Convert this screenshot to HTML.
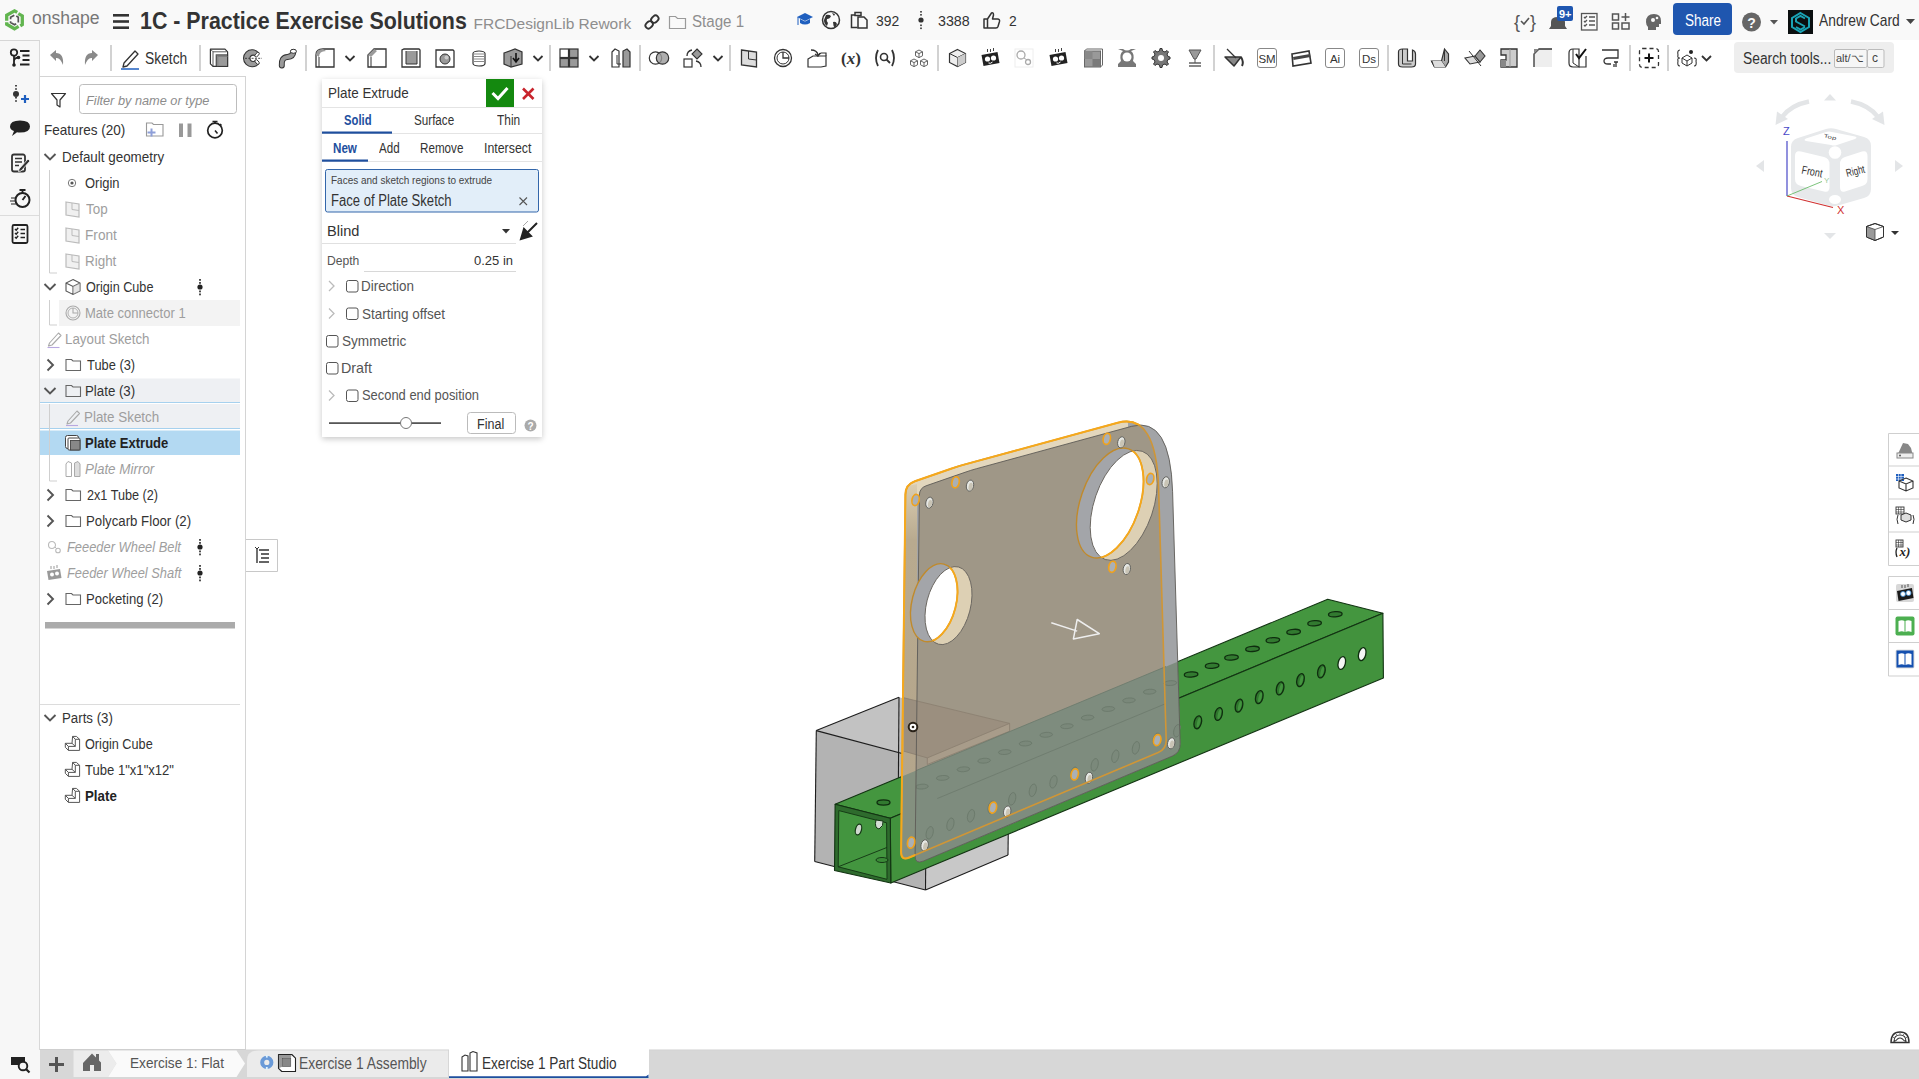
<!DOCTYPE html>
<html><head><meta charset="utf-8">
<style>
*{box-sizing:border-box;margin:0;padding:0}
html,body{width:1919px;height:1079px;overflow:hidden;background:#fff;font-family:"Liberation Sans",sans-serif;color:#333;position:relative}
.a{position:absolute}
.t{position:absolute;white-space:nowrap;line-height:1}
svg.full{position:absolute;left:0;top:0;width:1919px;height:1079px;overflow:visible}

</style></head><body>
<div class="a" style="left:0;top:0;width:1919px;height:40px;background:#f9f9f9"></div>
<div class="a" style="left:0;top:40px;width:40px;height:1010px;background:#f7f7f7;border-right:1px solid #d8d8d8;border-top:1px solid #d6d6d6"></div>
<div class="a" style="left:0;top:215px;width:39px;height:1px;background:#dcdcdc"></div>
<div class="a" style="left:40px;top:76px;width:206px;height:974px;background:#fff;border-top:1px solid #d4d4d4;border-right:1px solid #d4d4d4"></div>
<div class="a" style="left:0;top:1050px;width:1919px;height:29px;background:#dcdcdc"></div>
<div class="a" style="left:0;top:1050px;width:40px;height:29px;background:#f7f7f7"></div>
<svg class="full" viewBox="0 0 1919 1079"><polygon points="816.3,730.6 926.5,760.0 925.5,890.0 814.7,861.5" fill="#b3b3b3" stroke="none" stroke-width="1" stroke-linejoin="round" /><polygon points="926.5,760.0 1009.5,724.6 1008.0,855.0 925.5,890.0" fill="#c8c8c8" stroke="none" stroke-width="1" stroke-linejoin="round" /><polygon points="816.3,730.6 899.0,697.3 1009.5,724.6 926.5,760.0" fill="#c2c2c2" stroke="none" stroke-width="1" stroke-linejoin="round" /><line x1="816.3" y1="730.6" x2="899.0" y2="697.3" stroke="#1c1c1c" stroke-width="1.1" /><line x1="816.3" y1="730.6" x2="814.7" y2="861.5" stroke="#1c1c1c" stroke-width="1.1" /><line x1="814.7" y1="861.5" x2="925.5" y2="890.0" stroke="#1c1c1c" stroke-width="1.1" /><line x1="925.5" y1="890.0" x2="1008.0" y2="855.0" stroke="#1c1c1c" stroke-width="1.1" /><line x1="1008.0" y1="855.0" x2="1009.5" y2="724.6" stroke="#1c1c1c" stroke-width="1.1" /><line x1="899.0" y1="697.3" x2="898.4" y2="778.0" stroke="#1c1c1c" stroke-width="1.1" /><line x1="816.3" y1="730.6" x2="926.5" y2="760.0" stroke="#1c1c1c" stroke-width="1.1" /><line x1="926.5" y1="760.0" x2="925.5" y2="890.0" stroke="#1c1c1c" stroke-width="1.1" /><polygon points="835.1,804.3 1327.7,599.2 1382.9,613.2 890.3,818.3" fill="#44963f" stroke="#123312" stroke-width="1.1" stroke-linejoin="round" /><polygon points="890.3,818.3 1382.9,613.2 1383.4,677.9 890.8,883.0" fill="#42923d" stroke="#123312" stroke-width="1.1" stroke-linejoin="round" /><polygon points="835.1,804.3 890.3,818.3 890.8,883.0 834.5,870.5" fill="#2e6b2d" stroke="#123312" stroke-width="1.1" stroke-linejoin="round" /><polygon points="838.8,810.6 886.6,822.8 887.0,879.3 838.2,866.8" fill="#43953f" stroke="#123312" stroke-width="0.9" stroke-linejoin="round" /><line x1="838.2" y1="866.8" x2="886.8" y2="847.5" stroke="#123312" stroke-width="0.9" /><ellipse cx="858.5" cy="829.5" rx="3" ry="5.5" transform="rotate(15 858.5 829.5)" fill="#cfd8cf" stroke="#163816" stroke-width="1.2"/><path d="M876,820 Q874,828 879,829 Q884,826 883,821Z" fill="#d4ddd4" stroke="#163816" stroke-width="1"/><ellipse cx="882" cy="860" rx="6" ry="2.5" fill="#3a8a37" stroke="#163816" stroke-width="1"/><ellipse cx="1335.3" cy="614.3" rx="6.8" ry="2.6" transform="rotate(-4 1335.3 614.3)" fill="#327a30" stroke="#0f2d0f" stroke-width="1.3"/><ellipse cx="1314.6" cy="623.2" rx="6.8" ry="2.6" transform="rotate(-4 1314.6 623.2)" fill="#327a30" stroke="#0f2d0f" stroke-width="1.3"/><ellipse cx="1293.6" cy="631.9" rx="6.8" ry="2.6" transform="rotate(-4 1293.6 631.9)" fill="#327a30" stroke="#0f2d0f" stroke-width="1.3"/><ellipse cx="1272.9" cy="640.2" rx="6.8" ry="2.6" transform="rotate(-4 1272.9 640.2)" fill="#327a30" stroke="#0f2d0f" stroke-width="1.3"/><ellipse cx="1252.5" cy="648.9" rx="6.8" ry="2.6" transform="rotate(-4 1252.5 648.9)" fill="#327a30" stroke="#0f2d0f" stroke-width="1.3"/><ellipse cx="1231.5" cy="657.5" rx="6.8" ry="2.6" transform="rotate(-4 1231.5 657.5)" fill="#327a30" stroke="#0f2d0f" stroke-width="1.3"/><ellipse cx="1212.1" cy="665.8" rx="6.8" ry="2.6" transform="rotate(-4 1212.1 665.8)" fill="#327a30" stroke="#0f2d0f" stroke-width="1.3"/><ellipse cx="1191.1" cy="674.5" rx="6.8" ry="2.6" transform="rotate(-4 1191.1 674.5)" fill="#327a30" stroke="#0f2d0f" stroke-width="1.3"/><ellipse cx="883.5" cy="802.5" rx="6.5" ry="2.6" fill="#327a30" stroke="#0f2d0f" stroke-width="1.3"/><ellipse cx="1362.2" cy="654.1" rx="3.6" ry="6.6" transform="rotate(14 1362.2 654.1)" fill="#f4f6f4" stroke="#0f2d0f" stroke-width="1.3"/><ellipse cx="1341.8" cy="663" rx="3.6" ry="6.6" transform="rotate(14 1341.8 663)" fill="#f4f6f4" stroke="#0f2d0f" stroke-width="1.3"/><ellipse cx="1321.4" cy="671.4" rx="3.6" ry="6.6" transform="rotate(14 1321.4 671.4)" fill="#2f762d" stroke="#0f2d0f" stroke-width="1.3"/><ellipse cx="1322.2" cy="671.4" rx="1.5" ry="5" transform="rotate(14 1321.4 671.4)" fill="#43953f"/><ellipse cx="1300.5" cy="680.1" rx="3.6" ry="6.6" transform="rotate(14 1300.5 680.1)" fill="#2f762d" stroke="#0f2d0f" stroke-width="1.3"/><ellipse cx="1301.3" cy="680.1" rx="1.5" ry="5" transform="rotate(14 1300.5 680.1)" fill="#43953f"/><ellipse cx="1280.1" cy="688.4" rx="3.6" ry="6.6" transform="rotate(14 1280.1 688.4)" fill="#2f762d" stroke="#0f2d0f" stroke-width="1.3"/><ellipse cx="1280.8999999999999" cy="688.4" rx="1.5" ry="5" transform="rotate(14 1280.1 688.4)" fill="#43953f"/><ellipse cx="1259.3" cy="697.1" rx="3.6" ry="6.6" transform="rotate(14 1259.3 697.1)" fill="#2f762d" stroke="#0f2d0f" stroke-width="1.3"/><ellipse cx="1260.1" cy="697.1" rx="1.5" ry="5" transform="rotate(14 1259.3 697.1)" fill="#43953f"/><ellipse cx="1239" cy="705.6" rx="3.6" ry="6.6" transform="rotate(14 1239 705.6)" fill="#2f762d" stroke="#0f2d0f" stroke-width="1.3"/><ellipse cx="1239.8" cy="705.6" rx="1.5" ry="5" transform="rotate(14 1239 705.6)" fill="#43953f"/><ellipse cx="1218.6" cy="714" rx="3.6" ry="6.6" transform="rotate(14 1218.6 714)" fill="#2f762d" stroke="#0f2d0f" stroke-width="1.3"/><ellipse cx="1219.3999999999999" cy="714" rx="1.5" ry="5" transform="rotate(14 1218.6 714)" fill="#43953f"/><ellipse cx="1197.8" cy="722.3" rx="3.6" ry="6.6" transform="rotate(14 1197.8 722.3)" fill="#2f762d" stroke="#0f2d0f" stroke-width="1.3"/><ellipse cx="1198.6" cy="722.3" rx="1.5" ry="5" transform="rotate(14 1197.8 722.3)" fill="#43953f"/><defs><linearGradient id="lband" x1="0" y1="480" x2="0" y2="880" gradientUnits="userSpaceOnUse"><stop offset="0" stop-color="#dccfb3"/><stop offset="0.15" stop-color="#b8aa8f"/><stop offset="1" stop-color="#b3a48a"/></linearGradient><clipPath id="cpF"><path d="M923.3,861.1 L1172.2,756.1 Q1180.5,752.6 1180.2,743.6 L1172.6,491.8 Q1170.3,415.8 1131.7,426.3 L976.5,468.7 Q970.7,470.3 965.0,472.3 L926.1,485.8 Q919.5,488.1 919.4,495.1 L915.1,855.6 Q915.0,864.6 923.3,861.1 Z"/></clipPath><clipPath id="cpB"><path d="M909.3,857.5 L1158.2,752.5 Q1166.5,749.0 1166.2,740.0 L1158.6,488.2 Q1156.3,412.2 1117.7,422.7 L962.5,465.1 Q956.7,466.7 951.0,468.7 L914.9,481.2 Q905.5,484.5 905.4,494.5 L901.1,852.0 Q901.0,861.0 909.3,857.5 Z"/></clipPath><clipPath id="cpT"><polygon points="835.1,804.3 1327.7,599.2 1383.4,677.9 890.8,883.0 834.5,870.5"/></clipPath></defs><path d="M909.3,857.5 L1158.2,752.5 Q1166.5,749.0 1166.2,740.0 L1158.6,488.2 Q1156.3,412.2 1117.7,422.7 L962.5,465.1 Q956.7,466.7 951.0,468.7 L914.9,481.2 Q905.5,484.5 905.4,494.5 L901.1,852.0 Q901.0,861.0 909.3,857.5 Z" fill="#a2a4a7"/><path d="M923.3,861.1 L1172.2,756.1 Q1180.5,752.6 1180.2,743.6 L1172.6,491.8 Q1170.3,415.8 1131.7,426.3 L976.5,468.7 Q970.7,470.3 965.0,472.3 L926.1,485.8 Q919.5,488.1 919.4,495.1 L915.1,855.6 Q915.0,864.6 923.3,861.1 Z" fill="#a2a4a7"/><g clip-path="url(#cpB)"><polygon points="890,400 1128,400 1128,440 890,510" fill="#e3d7bd"/><polygon points="890,490 917,484 917,880 890,880" fill="url(#lband)"/></g><g clip-path="url(#cpF)"><path d="M909.3,857.5 L1158.2,752.5 Q1166.5,749.0 1166.2,740.0 L1158.6,488.2 Q1156.3,412.2 1117.7,422.7 L962.5,465.1 Q956.7,466.7 951.0,468.7 L914.9,481.2 Q905.5,484.5 905.4,494.5 L901.1,852.0 Q901.0,861.0 909.3,857.5 Z" fill="#9f9787"/></g><g clip-path="url(#cpT)"><path d="M909.3,857.5 L1158.2,752.5 Q1166.5,749.0 1166.2,740.0 L1158.6,488.2 Q1156.3,412.2 1117.7,422.7 L962.5,465.1 Q956.7,466.7 951.0,468.7 L914.9,481.2 Q905.5,484.5 905.4,494.5 L901.1,852.0 Q901.0,861.0 909.3,857.5 Z" fill="#84907f"/><path d="M923.3,861.1 L1172.2,756.1 Q1180.5,752.6 1180.2,743.6 L1172.6,491.8 Q1170.3,415.8 1131.7,426.3 L976.5,468.7 Q970.7,470.3 965.0,472.3 L926.1,485.8 Q919.5,488.1 919.4,495.1 L915.1,855.6 Q915.0,864.6 923.3,861.1 Z" fill="#7e8c7e"/></g><g clip-path="url(#cpB)"><polygon points="903.9,697.8 1009.6,723.4 1009.6,731.2 927.3,764.5 927.3,757.9 903.9,751.2" fill="#9b8f7f"/><polygon points="927.3,757.9 1009.6,723.4 1009.6,731.2 927.3,764.5" fill="#a89c8a"/></g><path d="M903.9,697.8 L1009.6,723.4 V731.2 L927.3,764.5 V757.9 L903.9,751.2 M927.3,757.9 L1009.6,723.4" fill="none" stroke="#8a7f70" stroke-width="0.8" clip-path="url(#cpB)"/><line x1="916.0" y1="770.6" x2="1166.0" y2="666.5" stroke="#6e7c6e" stroke-width="0.9" clip-path="url(#cpF)"/><line x1="937.3" y1="798.5" x2="1166.0" y2="703.5" stroke="#6e7c6e" stroke-width="0.9" clip-path="url(#cpF)"/><ellipse cx="1170.4" cy="683.1" rx="6.3" ry="2.4" transform="rotate(-4 1170.4 683.1)" fill="#7a887a" stroke="#6c7a6c" stroke-width="0.9" clip-path="url(#cpF)"/><ellipse cx="1149.7" cy="691.7" rx="6.3" ry="2.4" transform="rotate(-4 1149.7 691.7)" fill="#7a887a" stroke="#6c7a6c" stroke-width="0.9" clip-path="url(#cpF)"/><ellipse cx="1129.0" cy="700.4" rx="6.3" ry="2.4" transform="rotate(-4 1129.0 700.4)" fill="#7a887a" stroke="#6c7a6c" stroke-width="0.9" clip-path="url(#cpF)"/><ellipse cx="1108.3" cy="709.0" rx="6.3" ry="2.4" transform="rotate(-4 1108.3 709.0)" fill="#7a887a" stroke="#6c7a6c" stroke-width="0.9" clip-path="url(#cpF)"/><ellipse cx="1087.6" cy="717.6" rx="6.3" ry="2.4" transform="rotate(-4 1087.6 717.6)" fill="#7a887a" stroke="#6c7a6c" stroke-width="0.9" clip-path="url(#cpF)"/><ellipse cx="1066.9" cy="726.2" rx="6.3" ry="2.4" transform="rotate(-4 1066.9 726.2)" fill="#7a887a" stroke="#6c7a6c" stroke-width="0.9" clip-path="url(#cpF)"/><ellipse cx="1046.2" cy="734.8" rx="6.3" ry="2.4" transform="rotate(-4 1046.2 734.8)" fill="#7a887a" stroke="#6c7a6c" stroke-width="0.9" clip-path="url(#cpF)"/><ellipse cx="1025.5" cy="743.5" rx="6.3" ry="2.4" transform="rotate(-4 1025.5 743.5)" fill="#7a887a" stroke="#6c7a6c" stroke-width="0.9" clip-path="url(#cpF)"/><ellipse cx="1004.8" cy="752.1" rx="6.3" ry="2.4" transform="rotate(-4 1004.8 752.1)" fill="#7a887a" stroke="#6c7a6c" stroke-width="0.9" clip-path="url(#cpF)"/><ellipse cx="984.1" cy="760.7" rx="6.3" ry="2.4" transform="rotate(-4 984.1 760.7)" fill="#7a887a" stroke="#6c7a6c" stroke-width="0.9" clip-path="url(#cpF)"/><ellipse cx="963.4" cy="769.3" rx="6.3" ry="2.4" transform="rotate(-4 963.4 769.3)" fill="#7a887a" stroke="#6c7a6c" stroke-width="0.9" clip-path="url(#cpF)"/><ellipse cx="942.7" cy="777.9" rx="6.3" ry="2.4" transform="rotate(-4 942.7 777.9)" fill="#7a887a" stroke="#6c7a6c" stroke-width="0.9" clip-path="url(#cpF)"/><ellipse cx="922.0" cy="786.6" rx="6.3" ry="2.4" transform="rotate(-4 922.0 786.6)" fill="#7a887a" stroke="#6c7a6c" stroke-width="0.9" clip-path="url(#cpF)"/><ellipse cx="1177.2" cy="730.8" rx="3.4" ry="6.4" transform="rotate(14 1177.2 730.8)" fill="#7b897b" stroke="#6c7a6c" stroke-width="0.9" clip-path="url(#cpF)"/><ellipse cx="1156.6" cy="739.3" rx="3.4" ry="6.4" transform="rotate(14 1156.6 739.3)" fill="#7b897b" stroke="#6c7a6c" stroke-width="0.9" clip-path="url(#cpF)"/><ellipse cx="1135.9" cy="747.8" rx="3.4" ry="6.4" transform="rotate(14 1135.9 747.8)" fill="#7b897b" stroke="#6c7a6c" stroke-width="0.9" clip-path="url(#cpF)"/><ellipse cx="1115.3" cy="756.3" rx="3.4" ry="6.4" transform="rotate(14 1115.3 756.3)" fill="#7b897b" stroke="#6c7a6c" stroke-width="0.9" clip-path="url(#cpF)"/><ellipse cx="1094.7" cy="764.8" rx="3.4" ry="6.4" transform="rotate(14 1094.7 764.8)" fill="#7b897b" stroke="#6c7a6c" stroke-width="0.9" clip-path="url(#cpF)"/><ellipse cx="1074.1" cy="773.3" rx="3.4" ry="6.4" transform="rotate(14 1074.1 773.3)" fill="#7b897b" stroke="#6c7a6c" stroke-width="0.9" clip-path="url(#cpF)"/><ellipse cx="1053.5" cy="781.8" rx="3.4" ry="6.4" transform="rotate(14 1053.5 781.8)" fill="#7b897b" stroke="#6c7a6c" stroke-width="0.9" clip-path="url(#cpF)"/><ellipse cx="1032.8" cy="790.3" rx="3.4" ry="6.4" transform="rotate(14 1032.8 790.3)" fill="#7b897b" stroke="#6c7a6c" stroke-width="0.9" clip-path="url(#cpF)"/><ellipse cx="1012.2" cy="798.8" rx="3.4" ry="6.4" transform="rotate(14 1012.2 798.8)" fill="#7b897b" stroke="#6c7a6c" stroke-width="0.9" clip-path="url(#cpF)"/><ellipse cx="991.6" cy="807.3" rx="3.4" ry="6.4" transform="rotate(14 991.6 807.3)" fill="#7b897b" stroke="#6c7a6c" stroke-width="0.9" clip-path="url(#cpF)"/><ellipse cx="971.0" cy="815.8" rx="3.4" ry="6.4" transform="rotate(14 971.0 815.8)" fill="#7b897b" stroke="#6c7a6c" stroke-width="0.9" clip-path="url(#cpF)"/><ellipse cx="950.4" cy="824.3" rx="3.4" ry="6.4" transform="rotate(14 950.4 824.3)" fill="#7b897b" stroke="#6c7a6c" stroke-width="0.9" clip-path="url(#cpF)"/><ellipse cx="929.7" cy="832.8" rx="3.4" ry="6.4" transform="rotate(14 929.7 832.8)" fill="#7b897b" stroke="#6c7a6c" stroke-width="0.9" clip-path="url(#cpF)"/><path d="M923.3,861.1 L1172.2,756.1 Q1180.5,752.6 1180.2,743.6 L1172.6,491.8 Q1170.3,415.8 1131.7,426.3 L976.5,468.7 Q970.7,470.3 965.0,472.3 L926.1,485.8 Q919.5,488.1 919.4,495.1 L915.1,855.6 Q915.0,864.6 923.3,861.1 Z" fill="none" stroke="#5d5b57" stroke-width="0.9"/><defs><clipPath id="h1110503"><ellipse cx="1123.7" cy="505.4" rx="29.5" ry="57.2" transform="rotate(18.9 1123.7 505.4)"/></clipPath></defs><ellipse cx="1123.7" cy="505.4" rx="29.5" ry="57.2" transform="rotate(18.9 1123.7 505.4)" fill="#ddd0b4"/><ellipse cx="1110" cy="503" rx="29.5" ry="57.2" transform="rotate(18.9 1110 503)" fill="#a3a5a9"/><g clip-path="url(#h1110503)"><ellipse cx="1110" cy="503" rx="29.5" ry="57.2" transform="rotate(18.9 1110 503)" fill="#fff"/></g><ellipse cx="1123.7" cy="505.4" rx="29.5" ry="57.2" transform="rotate(18.9 1123.7 505.4)" fill="none" stroke="#6a6660" stroke-width="0.9"/><ellipse cx="1110" cy="503" rx="29.5" ry="57.2" transform="rotate(18.9 1110 503)" fill="none" stroke="#c08a2c" stroke-width="1.4"/><g clip-path="url(#h1110503)"><ellipse cx="1110" cy="503" rx="29.5" ry="57.2" transform="rotate(18.9 1110 503)" fill="none" stroke="#f5a81c" stroke-width="1.9"/></g><defs><clipPath id="h934602"><ellipse cx="948.5" cy="605.6" rx="22" ry="39.9" transform="rotate(14.4 948.5 605.6)"/></clipPath></defs><ellipse cx="948.5" cy="605.6" rx="22" ry="39.9" transform="rotate(14.4 948.5 605.6)" fill="#ddd0b4"/><ellipse cx="934" cy="602.7" rx="22" ry="39.9" transform="rotate(14.4 934 602.7)" fill="#a3a5a9"/><g clip-path="url(#h934602)"><ellipse cx="934" cy="602.7" rx="22" ry="39.9" transform="rotate(14.4 934 602.7)" fill="#fff"/></g><ellipse cx="948.5" cy="605.6" rx="22" ry="39.9" transform="rotate(14.4 948.5 605.6)" fill="none" stroke="#6a6660" stroke-width="0.9"/><ellipse cx="934" cy="602.7" rx="22" ry="39.9" transform="rotate(14.4 934 602.7)" fill="none" stroke="#c08a2c" stroke-width="1.4"/><g clip-path="url(#h934602)"><ellipse cx="934" cy="602.7" rx="22" ry="39.9" transform="rotate(14.4 934 602.7)" fill="none" stroke="#f5a81c" stroke-width="1.9"/></g><ellipse cx="1121.3" cy="442.3" rx="3.6" ry="5.6" transform="rotate(12 1121.3 442.3)" fill="#e6e8e4" stroke="#5f5f5a" stroke-width="0.9"/><ellipse cx="1122.1" cy="443.1" rx="2" ry="3.8" transform="rotate(12 1121.3 442.3)" fill="#c9c4b5"/><ellipse cx="1106.8" cy="438.9" rx="3.6" ry="5.6" transform="rotate(12 1106.8 438.9)" fill="#aab0b6" stroke="#f0a21c" stroke-width="1.7"/><ellipse cx="970" cy="485.6" rx="3.6" ry="5.6" transform="rotate(12 970 485.6)" fill="#e6e8e4" stroke="#5f5f5a" stroke-width="0.9"/><ellipse cx="970.8" cy="486.40000000000003" rx="2" ry="3.8" transform="rotate(12 970 485.6)" fill="#c9c4b5"/><ellipse cx="955.6" cy="482.3" rx="3.6" ry="5.6" transform="rotate(12 955.6 482.3)" fill="#aab0b6" stroke="#f0a21c" stroke-width="1.7"/><ellipse cx="929.4" cy="502.7" rx="3.6" ry="5.6" transform="rotate(12 929.4 502.7)" fill="#e6e8e4" stroke="#5f5f5a" stroke-width="0.9"/><ellipse cx="930.1999999999999" cy="503.5" rx="2" ry="3.8" transform="rotate(12 929.4 502.7)" fill="#c9c4b5"/><ellipse cx="915.6" cy="500" rx="3.6" ry="5.6" transform="rotate(12 915.6 500)" fill="#aab0b6" stroke="#f0a21c" stroke-width="1.7"/><ellipse cx="1165.7" cy="482.3" rx="3.6" ry="5.6" transform="rotate(12 1165.7 482.3)" fill="#e6e8e4" stroke="#5f5f5a" stroke-width="0.9"/><ellipse cx="1166.5" cy="483.1" rx="2" ry="3.8" transform="rotate(12 1165.7 482.3)" fill="#c9c4b5"/><ellipse cx="1150.2" cy="479" rx="3.6" ry="5.6" transform="rotate(12 1150.2 479)" fill="#aab0b6" stroke="#f0a21c" stroke-width="1.7"/><ellipse cx="1126.8" cy="569" rx="3.6" ry="5.6" transform="rotate(12 1126.8 569)" fill="#e6e8e4" stroke="#5f5f5a" stroke-width="0.9"/><ellipse cx="1127.6" cy="569.8" rx="2" ry="3.8" transform="rotate(12 1126.8 569)" fill="#c9c4b5"/><ellipse cx="1112.4" cy="566.8" rx="3.6" ry="5.6" transform="rotate(12 1112.4 566.8)" fill="#aab0b6" stroke="#f0a21c" stroke-width="1.7"/><ellipse cx="924.6" cy="845.3" rx="3.6" ry="5.6" transform="rotate(12 924.6 845.3)" fill="#e6e8e4" stroke="#5f5f5a" stroke-width="0.9"/><ellipse cx="925.4" cy="846.0999999999999" rx="2" ry="3.8" transform="rotate(12 924.6 845.3)" fill="#c9c4b5"/><ellipse cx="911.1" cy="842.7" rx="3.6" ry="5.6" transform="rotate(12 911.1 842.7)" fill="#aab0b6" stroke="#f0a21c" stroke-width="1.7"/><ellipse cx="1007.2" cy="811.5" rx="3.6" ry="5.6" transform="rotate(12 1007.2 811.5)" fill="#e6e8e4" stroke="#5f5f5a" stroke-width="0.9"/><ellipse cx="1008.0" cy="812.3" rx="2" ry="3.8" transform="rotate(12 1007.2 811.5)" fill="#c9c4b5"/><ellipse cx="992.9" cy="807.6" rx="3.6" ry="5.6" transform="rotate(12 992.9 807.6)" fill="#aab0b6" stroke="#f0a21c" stroke-width="1.7"/><ellipse cx="1088.9" cy="777.8" rx="3.6" ry="5.6" transform="rotate(12 1088.9 777.8)" fill="#e6e8e4" stroke="#5f5f5a" stroke-width="0.9"/><ellipse cx="1089.7" cy="778.5999999999999" rx="2" ry="3.8" transform="rotate(12 1088.9 777.8)" fill="#c9c4b5"/><ellipse cx="1074.7" cy="774.4" rx="3.6" ry="5.6" transform="rotate(12 1074.7 774.4)" fill="#aab0b6" stroke="#f0a21c" stroke-width="1.7"/><ellipse cx="1171.2" cy="743.3" rx="3.6" ry="5.6" transform="rotate(12 1171.2 743.3)" fill="#e6e8e4" stroke="#5f5f5a" stroke-width="0.9"/><ellipse cx="1172.0" cy="744.0999999999999" rx="2" ry="3.8" transform="rotate(12 1171.2 743.3)" fill="#c9c4b5"/><ellipse cx="1157.2" cy="740.1" rx="3.6" ry="5.6" transform="rotate(12 1157.2 740.1)" fill="#aab0b6" stroke="#f0a21c" stroke-width="1.7"/><defs><clipPath id="cpOut"><path clip-rule="evenodd" d="M700,350 H1300 V950 H700 Z M923.3,861.1 L1172.2,756.1 Q1180.5,752.6 1180.2,743.6 L1172.6,491.8 Q1170.3,415.8 1131.7,426.3 L976.5,468.7 Q970.7,470.3 965.0,472.3 L926.1,485.8 Q919.5,488.1 919.4,495.1 L915.1,855.6 Q915.0,864.6 923.3,861.1 Z"/></clipPath></defs><path d="M909.3,857.5 L1158.2,752.5 Q1166.5,749.0 1166.2,740.0 L1158.6,488.2 Q1156.3,412.2 1117.7,422.7 L962.5,465.1 Q956.7,466.7 951.0,468.7 L914.9,481.2 Q905.5,484.5 905.4,494.5 L901.1,852.0 Q901.0,861.0 909.3,857.5 Z" fill="none" stroke="#d09636" stroke-width="1.6"/><path d="M909.3,857.5 L1158.2,752.5 Q1166.5,749.0 1166.2,740.0 L1158.6,488.2 Q1156.3,412.2 1117.7,422.7 L962.5,465.1 Q956.7,466.7 951.0,468.7 L914.9,481.2 Q905.5,484.5 905.4,494.5 L901.1,852.0 Q901.0,861.0 909.3,857.5 Z" fill="none" stroke="#f5a81c" stroke-width="2" clip-path="url(#cpOut)"/><path d="M1051.3,622.8 L1077.2,631.1 M1077.2,619.5 L1099.3,633.7 L1073.4,638.9 Z" fill="none" stroke="#eeeeee" stroke-width="1.5" stroke-linejoin="round"/><circle cx="913" cy="727" r="4.3" fill="#fff" stroke="#2a2218" stroke-width="2"/><circle cx="913" cy="727" r="1.3" fill="#2a2218"/></svg>
<svg class="full" viewBox="0 0 1919 1079">
<!-- onshape logo -->
<g fill="none" stroke-linejoin="miter">
<path d="M6.7,20.8 V15.3 L14.5,10.8 L17.2,12.4" stroke="#62b550" stroke-width="3.3"/>
<path d="M18.3,13.6 L22.3,15.9 V24.6 L20.3,25.8" stroke="#62b550" stroke-width="3.3"/>
<path d="M6.7,22.3 V24.3 L14.5,28.8 L18.6,26.4" stroke="#62b550" stroke-width="3.3"/>
<path d="M10.6,19.3 V17.3 L14.3,15.2" stroke="#555" stroke-width="1.7"/>
<path d="M16.3,16.1 L18.3,17.3 V22.5" stroke="#555" stroke-width="1.7"/>
<path d="M10.6,21.3 V22.5 L14.5,24.7 L16.2,23.7" stroke="#555" stroke-width="1.7"/>
</g>
<!-- hamburger -->
<g fill="#333"><rect x="113" y="14" width="16" height="2.6"/><rect x="113" y="20.2" width="16" height="2.6"/><rect x="113" y="26.4" width="16" height="2.6"/></g>
<!-- link icon -->
<g transform="translate(652,22) rotate(-45)" fill="none" stroke="#333" stroke-width="1.8">
<rect x="-8" y="-3" width="8" height="6" rx="3"/><rect x="0" y="-3" width="8" height="6" rx="3"/>
</g>
<!-- folder -->
<path d="M669.5,16.5 h6 l2,2 h8 v10 h-16 z" fill="none" stroke="#9a9a9a" stroke-width="1.2"/>
<!-- grad cap -->
<g fill="#1f5fbf"><path d="M797,17 L805,13 L813,17 L805,21 Z"/><path d="M800,19 v4 q5,3 10,0 v-4 l-5,2.5 z"/><rect x="797.5" y="17" width="1" height="8"/></g>
<!-- globe -->
<circle cx="831" cy="20" r="8.5" fill="none" stroke="#333" stroke-width="1.5"/>
<path d="M826,15 q3,-1 5,1 q-1,3 -4,3 q-1,2 1,4 l-1,3 q-3,-2 -3,-6 z M833,22 q3,-1 4,2 l-2,4 q-2,-2 -2,-6z M832,13 l3,1 -1,2z" fill="#333"/>
<!-- copy icon -->
<g fill="none" stroke="#333" stroke-width="1.5"><path d="M855,15 h-3.5 v12.5 h6"/><path d="M858,17 h6 l3,3 v8 h-9 z"/><rect x="855" y="12.5" width="6" height="3" fill="#f9f9f9"/></g>
<!-- dots -->
<g fill="#333"><circle cx="921" cy="20" r="2.6"/><rect x="920.2" y="11" width="1.6" height="1.6"/><rect x="920.2" y="14" width="1.6" height="1.6"/><rect x="920.2" y="24.5" width="1.6" height="1.6"/><rect x="920.2" y="27.5" width="1.6" height="1.6"/></g>
<!-- thumbs up -->
<path d="M984,19 h3.5 v9 h-3.5 z M987.5,19 l4,-6 q2,-1 2,2 l-1,4 h5 q2.5,0 2,2.5 l-1.5,5 q-0.5,1.5 -2,1.5 h-8.5" fill="none" stroke="#333" stroke-width="1.5" stroke-linejoin="round"/>
<!-- {v} -->
<text x="1514" y="28" font-family="Liberation Sans" font-size="18" fill="#555">{</text>
<text x="1530" y="28" font-family="Liberation Sans" font-size="18" fill="#555">}</text>
<path d="M1521,21 l3,3 l5,-6" fill="none" stroke="#555" stroke-width="1.6"/>
<!-- bell -->
<path d="M1549,29 h18 l-2,-3 v-4 q0,-5 -7,-5 q-7,0 -7,5 v4 z" fill="#555"/>
<rect x="1557" y="6" width="16" height="15" rx="2" fill="#1e56b0"/>
<text x="1559" y="18" font-family="Liberation Sans" font-size="11" font-weight="bold" fill="#fff">9+</text>
<!-- checklist -->
<g fill="none" stroke="#555" stroke-width="1.3"><rect x="1581.5" y="13.5" width="15.5" height="16.5"/><path d="M1584,17 l1,1 2,-2 M1584,21 l1,1 2,-2 M1584,25 l1,1 2,-2 M1589,17 h6 M1589,21 h6 M1589,25 h6"/></g>
<!-- grid -->
<g fill="none" stroke="#555" stroke-width="1.5"><rect x="1612.5" y="14" width="6" height="6"/><rect x="1612.5" y="23" width="6" height="6"/><rect x="1622" y="23" width="7" height="6"/><path d="M1625.5,13 v8 M1621.5,17 h8"/></g>
<!-- brain head -->
<path d="M1646,22 q0,-8 8,-8 q7,0 7,7 l0,3 -2,0 0,3 -3,0 0,3 -8,0 0,-3 q-2,-2 -2,-5z" fill="#666"/>
<circle cx="1653" cy="20" r="2" fill="#f9f9f9"/><circle cx="1657" cy="18" r="1.3" fill="#f9f9f9"/>
<!-- share -->
<rect x="1673" y="3" width="59" height="32" rx="4" fill="#1f56af"/>
<!-- help -->
<circle cx="1751.5" cy="22" r="9.5" fill="#666"/>
<text x="1751.5" y="27.5" text-anchor="middle" font-family="Liberation Sans" font-size="14" font-weight="bold" fill="#f9f9f9">?</text>
<path d="M1770,20 h8 l-4,4.5z" fill="#555"/>
<!-- avatar -->
<rect x="1788" y="10" width="25" height="24" fill="#0b0f10"/>
<path d="M1800.5,13 l8.5,5 v9 l-8.5,5 l-8.5,-5 v-9 z" fill="none" stroke="#1aa3b5" stroke-width="2"/>
<path d="M1805,18.5 l-4.5,-2.5 -4.5,2.5 v3 l9,5 v0" fill="none" stroke="#1aa3b5" stroke-width="2"/>
<path d="M1796,27 l4.5,2.5 4.5,-2.5" fill="none" stroke="#1aa3b5" stroke-width="2"/>
<path d="M1906,19 h9 l-4.5,5z" fill="#444"/>
</svg>
<div class="t" style="left:31.50px;top:9.00px;font-size:18.00px;color:#777;transform:scaleX(0.9775);transform-origin:0 0">onshape</div>
<div class="t" style="left:140.08px;top:10.00px;font-size:23.25px;font-weight:bold;color:#333;transform:scaleX(0.9196);transform-origin:0 0">1C - Practice Exercise Solutions</div>
<div class="t" style="left:473.50px;top:16.00px;font-size:15.50px;color:#8e8e8e">FRCDesignLib Rework</div>
<div class="t" style="left:692.00px;top:13.00px;font-size:16.25px;color:#8e8e8e;transform:scaleX(0.9289);transform-origin:0 0">Stage 1</div>
<div class="t" style="left:875.50px;top:14.00px;font-size:14.75px;color:#333;transform:scaleX(0.9424);transform-origin:0 0">392</div>
<div class="t" style="left:937.50px;top:14.00px;font-size:14.75px;color:#333;transform:scaleX(0.9660);transform-origin:0 0">3388</div>
<div class="t" style="left:1008.50px;top:14.00px;font-size:14.75px;color:#333;transform:scaleX(0.9375);transform-origin:0 0">2</div>
<div class="t" style="left:1684.70px;top:13.00px;font-size:16.75px;color:#fff;transform:scaleX(0.8066);transform-origin:0 0">Share</div>
<div class="t" style="left:1818.50px;top:13.00px;font-size:15.75px;color:#333;transform:scaleX(0.8776);transform-origin:0 0">Andrew Card</div>
<svg class="full" viewBox="0 0 1919 1079"><g transform="translate(57,58)"><path d="M-7,-3 L-1,-8 L-1,-5 Q7,-5 6,7 Q3,-1 -1,0 L-1,3 Z" fill="#8a8a8a"/></g><g transform="translate(91,58)"><path d="M7,-3 L1,-8 L1,-5 Q-7,-5 -6,7 Q-3,-1 1,0 L1,3 Z" fill="#8a8a8a"/></g><rect x="110" y="45" width="2" height="26" fill="#d2d2d2"/><rect x="199" y="45" width="2" height="26" fill="#d2d2d2"/><rect x="305" y="45" width="2" height="26" fill="#d2d2d2"/><rect x="549" y="45" width="2" height="26" fill="#d2d2d2"/><rect x="639" y="45" width="2" height="26" fill="#d2d2d2"/><rect x="729" y="45" width="2" height="26" fill="#d2d2d2"/><rect x="937" y="45" width="2" height="26" fill="#d2d2d2"/><rect x="1213" y="45" width="2" height="26" fill="#d2d2d2"/><rect x="1387" y="45" width="2" height="26" fill="#d2d2d2"/><rect x="1629" y="45" width="2" height="26" fill="#d2d2d2"/><rect x="1667" y="45" width="2" height="26" fill="#d2d2d2"/><g transform="translate(130,58)"><path d="M-6,5 L5,-7 L8,-4 L-3,8 L-7,9 Z" fill="none" stroke="#333" stroke-width="1.3" stroke-linejoin="round"/><path d="M-9,11 h18" stroke="#1f5fbf" stroke-width="1.5"/></g><g transform="translate(219,58)"><path d="M-8.6,-8.8 H6 L8.6,-6.2 V8.4 H-6 L-8.6,5.8 Z" fill="#fff" stroke="#333" stroke-width="1.2" stroke-linejoin="round"/><path d="M-8.6,-8.8 L-6,-6.2 H7.6 M-6,-6.2 V8.4" fill="none" stroke="#333" stroke-width="0.8"/><rect x="-2.8" y="-3.1" width="11.4" height="11.5" fill="#9a9a9a" stroke="#333" stroke-width="1"/><path d="M-2.8,-3.1 L-1.2,-1.5 H8.6 M-1.2,-1.5 V8.4" fill="none" stroke="#777" stroke-width="0.7"/></g><path d="M258.5,52.8 A8.5,8.5 0 1 0 258.5,63.8 L255.5,60.4 A3.2,3.2 0 1 1 255.5,56.2 Z" fill="#9a9a9a" stroke="#333" stroke-width="1.1" stroke-linejoin="round"/><ellipse cx="257.1" cy="54.6" rx="1.5" ry="2.8" transform="rotate(42 257.1 54.6)" fill="#fff" stroke="#333" stroke-width="0.9"/><ellipse cx="257.1" cy="62" rx="1.5" ry="2.8" transform="rotate(-42 257.1 62)" fill="#fff" stroke="#333" stroke-width="0.9"/><path d="M245,58.3 H262" stroke="#333" stroke-width="0.9" stroke-dasharray="2,1.3"/><path d="M281.8,65.5 Q281,57.5 287.5,57 Q293,56.5 293.3,52" fill="none" stroke="#333" stroke-width="6"  stroke-linecap="round"/><path d="M281.8,65.5 Q281,57.5 287.5,57 Q293,56.5 293.3,52" fill="none" stroke="#9a9a9a" stroke-width="4" stroke-linecap="round"/><ellipse cx="293.4" cy="51.3" rx="3" ry="2" fill="#fff" stroke="#333" stroke-width="1"/><g transform="translate(325,58)"><path d="M-9,9 V-3 Q-9,-9 -2,-9 H9 V9 Z" fill="#fff" stroke="#333" stroke-width="1.3"/><path d="M-9,-3 Q-9,-9 -2,-9 L1,-7 Q-6,-7 -6,-1 Z" fill="#9a9a9a"/><path d="M-6,-1 V9" stroke="#333" stroke-width="1"/></g><g transform="translate(350,58)"><path d="M-4.5,-2 L0,2.5 L4.5,-2" fill="none" stroke="#333" stroke-width="1.8"/></g><g transform="translate(377,58)"><path d="M-9,9 V-3 L-3,-9 H9 V9 Z" fill="#fff" stroke="#333" stroke-width="1.3"/><path d="M-9,-3 L-3,-9 L0,-7 L-6,-1 Z" fill="#9a9a9a"/><path d="M-6,-1 V9" stroke="#333" stroke-width="1"/></g><g transform="translate(411,58)"><path d="M-9,9 V-8 L-7,-9 H8 L9,-8 V9 Z" fill="#fff" stroke="#333" stroke-width="1.3"/><path d="M-5,-7 V6 H6 V-7" fill="#9a9a9a" stroke="#333" stroke-width="1"/></g><g transform="translate(445,58)"><path d="M-9,9 V-8 H8 L9,-7 V9 Z" fill="#fff" stroke="#333" stroke-width="1.3"/><circle cx="0" cy="1" r="5" fill="#9a9a9a" stroke="#333" stroke-width="1"/><circle cx="1.5" cy="-0.5" r="2" fill="#ccc"/></g><g transform="translate(479,58)"><rect x="-6" y="-7" width="12" height="15" rx="6" ry="2.5" fill="#fff" stroke="#333" stroke-width="1.2"/><path d="M-6,-4 h12 M-6,-1.5 h12 M-6,1 h12 M-6,3.5 h12" stroke="#8a8a8a" stroke-width="1.2"/></g><g transform="translate(513,58)"><path d="M-9,-5 L2,-9 L9,-6 V6 L-2,9 L-9,6 Z" fill="#9a9a9a" stroke="#333" stroke-width="1.2"/><path d="M-2,-2 V9" stroke="#333" stroke-width="1"/><path d="M3,-5 V3 M0,0 L3,4 L6,0" fill="none" stroke="#111" stroke-width="1.6"/></g><g transform="translate(538,58)"><path d="M-4.5,-2 L0,2.5 L4.5,-2" fill="none" stroke="#333" stroke-width="1.8"/></g><g transform="translate(569,58)"><rect x="-9" y="-9" width="8.5" height="8.5" fill="#fff" stroke="#333" stroke-width="1.2"/><rect x="0.5" y="-9" width="8.5" height="8.5" fill="#9a9a9a" stroke="#333" stroke-width="1.2"/><rect x="-9" y="0.5" width="8.5" height="8.5" fill="#9a9a9a" stroke="#333" stroke-width="1.2"/><rect x="0.5" y="0.5" width="8.5" height="8.5" fill="#9a9a9a" stroke="#333" stroke-width="1.2"/></g><g transform="translate(594,58)"><path d="M-4.5,-2 L0,2.5 L4.5,-2" fill="none" stroke="#333" stroke-width="1.8"/></g><g transform="translate(621,58)"><path d="M-9,-6 L-6,-9 L-2,-7 V9 H-9 Z" fill="#fff" stroke="#333" stroke-width="1.2"/><path d="M9,-6 L6,-9 L2,-7 V9 H9 Z" fill="#9a9a9a" stroke="#333" stroke-width="1.2"/><path d="M-4,-3 V6 H0" fill="none" stroke="#333" stroke-width="1"/></g><g transform="translate(659,58)"><circle cx="-3.5" cy="0" r="6.2" fill="#fff" stroke="#333" stroke-width="1.2"/><circle cx="3.5" cy="0" r="6.2" fill="#9a9a9a" fill-opacity="0.8" stroke="#333" stroke-width="1.2"/></g><g transform="translate(693,58)"><rect x="-9" y="1" width="8" height="8" fill="#fff" stroke="#333" stroke-width="1.2"/><path d="M4,-9 L9,-4 L4,1 L-1,-4 Z" fill="#9a9a9a" stroke="#333" stroke-width="1.1"/><path d="M-6,-2 Q-6,-7 -1,-8 M3,3 Q8,4 8,9" fill="none" stroke="#333" stroke-width="1.3"/></g><g transform="translate(718,58)"><path d="M-4.5,-2 L0,2.5 L4.5,-2" fill="none" stroke="#333" stroke-width="1.8"/></g><g transform="translate(749.5,58)"><path d="M-8,-8 L7,-6 V9 L-8,7 Z" fill="#ddd" stroke="#333" stroke-width="1.3"/><path d="M-1,-7 V1 L7,2" fill="none" stroke="#333" stroke-width="1"/></g><g transform="translate(783,58)"><circle r="8.5" fill="#fff" stroke="#333" stroke-width="1.3"/><circle r="6" fill="none" stroke="#333" stroke-width="1"/><path d="M0,-6 V0 H6" fill="none" stroke="#333" stroke-width="1.3"/></g><g transform="translate(817,58)"><path d="M-9,1 L-4,-2 H9 V8 L4,9 H-9 Z" fill="#fff" stroke="#333" stroke-width="1.2"/><path d="M0,-2 L4,-5 H9 V-2" fill="none" stroke="#333" stroke-width="1.2"/><path d="M-6,-8 Q0,-8 1,-3 M-2,-4 L1,-2 L3,-5" fill="none" stroke="#333" stroke-width="1.3"/></g><text x="851" y="64" text-anchor="middle" font-family="Liberation Serif" font-size="17" font-weight="bold" fill="#333">(<tspan font-style="italic">x</tspan>)</text><g transform="translate(885,58)"><path d="M-7,-8 Q-11,0 -7,8 M7,-8 Q11,0 7,8" fill="none" stroke="#333" stroke-width="1.8"/><circle cx="-1" cy="-1" r="3.5" fill="none" stroke="#333" stroke-width="1.6"/><path d="M1.5,1.5 L5,5" stroke="#333" stroke-width="1.8"/></g><g transform="translate(919,58)"><g transform="translate(0,-5)"><path d="M0,-3 L3.5,-1.2 V2.8 L0,4.6 L-3.5,2.8 V-1.2 Z M-3.5,-1.2 L0,0.6 L3.5,-1.2 M0,0.6 V4.6" fill="#fff" stroke="#555" stroke-width="0.9"/></g><g transform="translate(-5,4)"><path d="M0,-3 L3.5,-1.2 V2.8 L0,4.6 L-3.5,2.8 V-1.2 Z M-3.5,-1.2 L0,0.6 L3.5,-1.2 M0,0.6 V4.6" fill="#fff" stroke="#555" stroke-width="0.9"/></g><g transform="translate(5,4)"><path d="M0,-3 L3.5,-1.2 V2.8 L0,4.6 L-3.5,2.8 V-1.2 Z M-3.5,-1.2 L0,0.6 L3.5,-1.2 M0,0.6 V4.6" fill="#fff" stroke="#555" stroke-width="0.9"/></g></g><g transform="translate(957.5,58)"><path d="M0,-8.5 L8,-4.5 V4.5 L0,8.5 L-8,4.5 V-4.5 Z" fill="#eee" stroke="#333" stroke-width="1.2"/><path d="M-8,-4.5 L0,-0.5 L8,-4.5 M0,-0.5 V8.5" fill="none" stroke="#333" stroke-width="1"/><path d="M0,-0.5 L8,-4.5 V4.5 L0,8.5Z" fill="#ccc"/></g><g transform="translate(990.5,58)"><path d="M-9,-3 L7,-6 L9,5 L-7,8 Z" fill="#222"/><circle cx="-3" cy="1" r="2.6" fill="#fff"/><circle cx="3" cy="0" r="2.6" fill="#fff"/><path d="M-3,-6 V-9 M0,-6 V-9 M3,-7 V-10" stroke="#444" stroke-width="1"/><path d="M-2,5 q2,1 4,-1" stroke="#fff" fill="none"/></g><g transform="translate(1024,58)"><rect x="-9" y="-9" width="18" height="18" fill="none" stroke="#eee" stroke-width="1"/><circle cx="-3" cy="-3" r="4" fill="none" stroke="#aaa" stroke-width="1.3"/><circle cx="4" cy="4" r="2.5" fill="none" stroke="#aaa" stroke-width="1.3"/><path d="M0,0 L3,2" stroke="#aaa"/></g><g transform="translate(1058.5,58)"><path d="M-9,-3 L7,-6 L9,5 L-7,8 Z" fill="#222"/><circle cx="-3" cy="1" r="2.6" fill="#fff"/><circle cx="3" cy="0" r="2.6" fill="#fff"/><path d="M-3,-6 V-9 M0,-6 V-9 M3,-7 V-10" stroke="#444" stroke-width="1"/><path d="M-2,5 q2,1 4,-1" stroke="#fff" fill="none"/></g><g transform="translate(1092.5,58)"><rect x="-8" y="-7" width="16" height="16" fill="#999" stroke="#666"/><rect x="-8" y="-7" width="8" height="8" fill="#888"/><rect x="0" y="1" width="8" height="8" fill="#7a7a7a"/><path d="M-8,-7 L-6,-9 H10 V7 L8,9" fill="none" stroke="#666"/></g><g transform="translate(1127,58)"><path d="M-9,9 H9 V6 L6,3 Q8,-4 4,-7 L9,-9 L4,-9 Q0,-6 -4,-9 L-9,-9 L-4,-7 Q-8,-4 -6,3 L-9,6 Z" fill="#777"/><circle cx="0" cy="-1" r="4.5" fill="#fff"/></g><g transform="translate(1160,57.5)"><path d="M0,-9 L2,-9 L2.5,-6.5 L5,-5.5 L7,-7 L8.5,-5.5 L7,-3.5 L8,-1 L10,-0.5 L10,1.5 L8,2 L7,4.5 L8.5,6.5 L7,8 L5,6.5 L2.5,7.5 L2,10 L0,10 L-0.5,7.5 L-3,6.5 L-5,8 L-6.5,6.5 L-5,4.5 L-6,2 L-8,1.5 L-8,-0.5 L-6,-1 L-5,-3.5 L-6.5,-5.5 L-5,-7 L-3,-5.5 L-0.5,-6.5 Z" fill="#777" stroke="#333" stroke-width="1"/><circle cx="1" cy="0.5" r="3" fill="#fff"/></g><g transform="translate(1195,58)"><path d="M-6,-8 H6 L1,1 H-1 Z" fill="#999" stroke="#555" stroke-width="1"/><path d="M-6,5 H6 M-6,8 H6" stroke="#888" stroke-width="2"/><path d="M0,1 V5" stroke="#555"/></g><g transform="translate(1233,58)"><path d="M-8,-1 L8,-1 L1,8 Z" fill="#888" stroke="#333" stroke-width="1.5" stroke-linejoin="round"/><path d="M-6,-9 L3,0" stroke="#333" stroke-width="1.3"/><path d="M8,-1 Q11,4 9,8" stroke="#333" stroke-width="2" fill="none"/></g><g transform="translate(1267,58)"><rect x="-9.5" y="-9.5" width="19" height="19" rx="2.5" fill="#fff" stroke="#888" stroke-width="1"/><text x="0" y="4.5" text-anchor="middle" font-family="Liberation Sans" font-size="11.5" fill="#333">SM</text></g><g transform="translate(1301,58)"><path d="M-9,-4 L8,-7 L10,5 L-8,8 Z" fill="#fff" stroke="#333" stroke-width="1.6"/><path d="M-8,-1 L9,-4 L9.5,-1 L-7.5,2 Z" fill="#444"/></g><g transform="translate(1335,58)"><rect x="-9.5" y="-9.5" width="19" height="19" rx="2.5" fill="#fff" stroke="#888" stroke-width="1"/><text x="0" y="4.5" text-anchor="middle" font-family="Liberation Sans" font-size="11.5" fill="#333">Ai</text></g><g transform="translate(1369,58)"><rect x="-9.5" y="-9.5" width="19" height="19" rx="2.5" fill="#fff" stroke="#888" stroke-width="1"/><text x="0" y="4.5" text-anchor="middle" font-family="Liberation Sans" font-size="11.5" fill="#333">Ds</text></g><g transform="translate(1406.5,58)"><path d="M-8,-6 Q-8,-9 -4,-9 H1 V3 H6 V-8 Q9,-7 9,-4 V6 Q9,9 5,9 H-4 Q-8,9 -8,6 Z" fill="#ccc" stroke="#333" stroke-width="1.2"/><path d="M-4,-9 V6 H5" fill="none" stroke="#333" stroke-width="1"/></g><g transform="translate(1440.5,58)"><path d="M-9,3 H1 L4,-9 L8,-4 V4 L5,9 H-6 Z" fill="#aaa" stroke="#333" stroke-width="1.2"/><path d="M-9,3 L-6,9" stroke="#333"/><path d="M1,3 L5,9 M4,-9 V3" fill="none" stroke="#333"/><path d="M-8,3 H1 L5,9 H-6Z" fill="#ddd"/></g><g transform="translate(1475,58)"><path d="M-10,0 L0,-2 L5,4 L-5,6 Z" fill="#ddd" stroke="#333" stroke-width="1.1"/><path d="M0,-2 L5,-8 L10,-2 L5,4 Z" fill="#999" stroke="#333" stroke-width="1.1"/><path d="M-6,-7 L6,8" stroke="#333" stroke-width="1"/></g><g transform="translate(1509,58)"><path d="M-8,-9 H8 V9 H-8 V2 H-3 V-3 H-8 Z" fill="#ccc" stroke="#333" stroke-width="1.3"/><path d="M-8,2 H-3 V9 H-8Z" fill="#888"/><path d="M1,-9 V9" stroke="#999"/></g><g transform="translate(1543,58)"><path d="M-9,9 V-4 L-4,-9 H9 V9 Z" fill="#eee"/><path d="M-9,9 V-4 L-4,-9 H9" fill="none" stroke="#333" stroke-width="1.3"/><path d="M-9,-4 L-4,-9 H-9Z" fill="#888"/></g><g transform="translate(1577,58)"><path d="M-8,-5 Q-8,-9 -4,-9 H2 V9 H-4 Q-8,9 -8,5 Z" fill="#fff" stroke="#333" stroke-width="1.2"/><path d="M-4,-9 V5 L2,9" fill="none" stroke="#333"/><path d="M-1,-4 L2,0 L9,-9" fill="none" stroke="#111" stroke-width="2"/><path d="M2,9 H9 V-2" fill="none" stroke="#333" stroke-width="1.2"/></g><g transform="translate(1611,58)"><path d="M-9,-8 H7 V0 H-3 Q-7,0 -7,3 Q-7,6 -3,6 H0 M3,6 V9 M5,4 V9 M7,4 H3" fill="none" stroke="#333" stroke-width="1.3"/></g><g transform="translate(1649,58)"><rect x="-9.5" y="-9.5" width="19" height="19" rx="3" fill="none" stroke="#333" stroke-width="1.3" stroke-dasharray="4,3"/><path d="M-4.5,0 H4.5 M0,-4.5 V4.5" stroke="#111" stroke-width="2"/></g><g transform="translate(1687,58)"><path d="M-7,-8 Q-10,-8 -9,-3 Q-10,0 -7,0 M-7,0 Q-10,0 -9,3 Q-10,8 -7,8" fill="none" stroke="#333" stroke-width="1.1"/><path d="M7,0 Q10,0 9,3 Q10,8 7,8" fill="none" stroke="#333" stroke-width="1.1"/><path d="M0,-3 L5,0 V5 L0,8 L-5,5 V0 Z M-5,0 L0,3 L5,0 M0,3 V8" fill="#fff" stroke="#333" stroke-width="1"/><circle cx="4" cy="-6" r="2" fill="#222"/></g><g transform="translate(1706.5,58)"><path d="M-4.5,-2 L0,2.5 L4.5,-2" fill="none" stroke="#333" stroke-width="1.8"/></g><g transform="translate(20,58)"><circle cx="-6" cy="-5.5" r="3.2" fill="none" stroke="#222" stroke-width="1.8"/><path d="M-6,-2.3 V7 M-6,3 Q-6,0 -1.5,-0.5" fill="none" stroke="#222" stroke-width="1.8"/><circle cx="-6" cy="7" r="1.8" fill="#222"/><circle cx="-1.5" cy="-0.5" r="1.8" fill="#222"/><path d="M0,-7 H9.5 M2.5,-2.5 H9.5 M2.5,2 H9.5 M0,6.5 H9.5" stroke="#222" stroke-width="1.9"/></g><g transform="translate(20,94)"><circle cx="-4" cy="0" r="3" fill="#333"/><path d="M-4,-9 V-3 M-4,3 V9" stroke="#333" stroke-width="1.8" stroke-dasharray="1.6,1.6"/><path d="M1,5 H9 M5,1 V9" stroke="#1f5fbf" stroke-width="2.2"/></g><g transform="translate(20,128)"><path d="M-10,-1.5 Q-10,-7.5 0,-7.5 Q10,-7.5 10,-1.5 Q10,4.5 0,4.5 Q-2,4.5 -3,4.3 L-8,8 L-6,3 Q-10,1.5 -10,-1.5 Z" fill="#222"/></g><g transform="translate(20,163)"><rect x="-8" y="-8.5" width="13" height="17" rx="2" fill="none" stroke="#333" stroke-width="1.8"/><path d="M-5,-4.5 H2 M-5,-1 H2 M-5,2.5 H-1" stroke="#333" stroke-width="1.5"/><path d="M-1,6 L8,-4 L10,-2 L1,8 L-1.5,8.5Z" fill="#333" stroke="#f7f7f7" stroke-width="0.8"/></g><g transform="translate(21,199)"><circle cx="1.5" cy="1" r="7" fill="none" stroke="#222" stroke-width="2"/><path d="M1.5,1 L4.5,-3" stroke="#222" stroke-width="1.8"/><path d="M-1.5,-9 H4.5 M1.5,-9 V-6" stroke="#222" stroke-width="1.8"/><path d="M-10,-1 H-5 M-11,2 H-6 M-10,5 H-5" stroke="#222" stroke-width="1.1"/></g><g transform="translate(20,234)"><rect x="-7.5" y="-9" width="15" height="18" rx="1.5" fill="none" stroke="#222" stroke-width="1.8"/><path d="M-5,-5 l1.2,1.2 2,-2.4 M-5,-1 l1.2,1.2 2,-2.4 M-5,3 l1.2,1.2 2,-2.4 M0.5,-4.5 h4.5 M0.5,-0.5 h4.5 M0.5,3.5 h4.5" fill="none" stroke="#222" stroke-width="1.4"/></g><g transform="translate(20,1064)"><rect x="-9" y="-7" width="14" height="8" fill="#222"/><circle cx="3" cy="2" r="4.3" fill="#f7f7f7" stroke="#222" stroke-width="1.9"/><path d="M6,5 L9.5,8.5" stroke="#222" stroke-width="2.2"/></g><rect x="1734" y="42" width="160" height="31" rx="4" fill="#eeeeee"/><rect x="1834.5" y="49.5" width="32.5" height="18" rx="1.5" fill="#f6f6f6" stroke="#bbb"/><rect x="1867.5" y="49.5" width="16.5" height="18" rx="1.5" fill="#f6f6f6" stroke="#bbb"/></svg>
<div class="t" style="left:144.50px;top:51.00px;font-size:16.00px;color:#333;transform:scaleX(0.8643);transform-origin:0 0">Sketch</div>
<div class="t" style="left:1743.00px;top:51.00px;font-size:16.00px;color:#333;transform:scaleX(0.8629);transform-origin:0 0">Search tools...</div>
<div class="t" style="left:1836.00px;top:53.00px;font-size:11.00px;color:#444">alt/⌥</div>
<div class="t" style="left:1872.00px;top:52.00px;font-size:12.00px;color:#444">c</div>
<svg class="full" viewBox="0 0 1919 1079"><rect x="59" y="300" width="181" height="26" fill="#f3f3f3"/><rect x="40" y="378.5" width="200" height="24" fill="#eef0f3"/><rect x="40" y="402" width="200" height="1" fill="#a6d1ee"/><rect x="40" y="404" width="200" height="24.5" fill="#eef0f3"/><rect x="40" y="428" width="200" height="1" fill="#a6d1ee"/><rect x="40" y="430.5" width="200" height="24.5" fill="#b3d9f2"/><path d="M49.5,170 V273 H57 M49.5,300 V325 H57 M49.5,404 V481 H57" fill="none" stroke="#cfcfcf" stroke-width="1"/><g transform="translate(58.5,100)"><path d="M-7,-6.5 H7 L1.5,0 V7 L-1.5,5 V0 Z" fill="none" stroke="#333" stroke-width="1.2" stroke-linejoin="round"/></g><rect x="79.5" y="84.5" width="157" height="29" rx="3" fill="#fff" stroke="#bdbdbd"/><g transform="translate(155,130)"><path d="M-8.5,-7 h5.5 l1.5,1.5 h9.5 v11.5 h-16.5 z" fill="none" stroke="#999" stroke-width="1.1"/><path d="M-7.5,2.5 h8 M-3.5,-1.5 v8" stroke="#8e9fd8" stroke-width="2"/></g><rect x="179" y="123.5" width="4" height="13.5" fill="#999"/><rect x="187.5" y="123.5" width="4" height="13.5" fill="#999"/><g transform="translate(215,130.5)"><circle r="7.3" fill="none" stroke="#222" stroke-width="1.7"/><path d="M0,0 L2.5,3 M-2.5,-9 H2.5 M0,-9 V-7 M5,-6.5 L6.5,-5" stroke="#222" stroke-width="1.6"/></g><g transform="translate(50,157)"><path d="M-5.5,-3 L0,2.5 L5.5,-3" fill="none" stroke="#555" stroke-width="1.9"/></g><g transform="translate(72,183)"><circle r="3.7" fill="none" stroke="#777" stroke-width="1"/><circle r="1.6" fill="#555"/></g><g transform="translate(73,209)"><path d="M-7,-7 L6,-5 V8 L-7,6 Z" fill="#f0f0f0" stroke="#bbb" stroke-width="1.2"/><path d="M-1,-6 V0.5 L6,1.5" fill="none" stroke="#bbb" stroke-width="1"/></g><g transform="translate(73,235)"><path d="M-7,-7 L6,-5 V8 L-7,6 Z" fill="#f0f0f0" stroke="#bbb" stroke-width="1.2"/><path d="M-1,-6 V0.5 L6,1.5" fill="none" stroke="#bbb" stroke-width="1"/></g><g transform="translate(73,261)"><path d="M-7,-7 L6,-5 V8 L-7,6 Z" fill="#f0f0f0" stroke="#bbb" stroke-width="1.2"/><path d="M-1,-6 V0.5 L6,1.5" fill="none" stroke="#bbb" stroke-width="1"/></g><g transform="translate(50,287)"><path d="M-5.5,-3 L0,2.5 L5.5,-3" fill="none" stroke="#555" stroke-width="1.9"/></g><g transform="translate(73,287)"><path d="M0,-7.5 L7,-4 V4 L0,7.5 L-7,4 V-4 Z M-7,-4 L0,-0.5 L7,-4 M0,-0.5 V7.5" fill="#fff" stroke="#555" stroke-width="1.1"/><path d="M0,-0.5 L7,-4 V4 L0,7.5Z" fill="#ccc" fill-opacity="0.5"/></g><g transform="translate(200,287)"><circle r="2.6" fill="#222"/><rect x="-0.8" y="-8" width="1.6" height="1.8" fill="#222"/><rect x="-0.8" y="-5" width="1.6" height="1.8" fill="#222"/><rect x="-0.8" y="3.5" width="1.6" height="1.8" fill="#222"/><rect x="-0.8" y="6.5" width="1.6" height="1.8" fill="#222"/></g><g transform="translate(73,313)"><circle r="7" fill="none" stroke="#aaa" stroke-width="1.1"/><circle r="5" fill="none" stroke="#aaa" stroke-width="0.9"/><path d="M0,-5 V0 H5" fill="none" stroke="#aaa" stroke-width="1.1"/></g><g transform="translate(54.5,339)"><path d="M-5,4 L4,-6 L6.5,-3.5 L-2.5,6 L-6,7 Z" fill="none" stroke="#aaa" stroke-width="1.1" stroke-linejoin="round"/><path d="M-7,8.5 h12" stroke="#b8a8e0" stroke-width="1.1"/></g><g transform="translate(50,365)"><path d="M-2.5,-5.5 L3,0 L-2.5,5.5" fill="none" stroke="#555" stroke-width="1.9"/></g><g transform="translate(73,365)"><path d="M-7,-5.5 h5.5 l1.5,1.5 h7.5 v9.5 h-14.5 z" fill="none" stroke="#666" stroke-width="1.1"/></g><g transform="translate(50,495)"><path d="M-2.5,-5.5 L3,0 L-2.5,5.5" fill="none" stroke="#555" stroke-width="1.9"/></g><g transform="translate(73,495)"><path d="M-7,-5.5 h5.5 l1.5,1.5 h7.5 v9.5 h-14.5 z" fill="none" stroke="#666" stroke-width="1.1"/></g><g transform="translate(50,521)"><path d="M-2.5,-5.5 L3,0 L-2.5,5.5" fill="none" stroke="#555" stroke-width="1.9"/></g><g transform="translate(73,521)"><path d="M-7,-5.5 h5.5 l1.5,1.5 h7.5 v9.5 h-14.5 z" fill="none" stroke="#666" stroke-width="1.1"/></g><g transform="translate(50,599)"><path d="M-2.5,-5.5 L3,0 L-2.5,5.5" fill="none" stroke="#555" stroke-width="1.9"/></g><g transform="translate(73,599)"><path d="M-7,-5.5 h5.5 l1.5,1.5 h7.5 v9.5 h-14.5 z" fill="none" stroke="#666" stroke-width="1.1"/></g><g transform="translate(50,391)"><path d="M-5.5,-3 L0,2.5 L5.5,-3" fill="none" stroke="#555" stroke-width="1.9"/></g><g transform="translate(73,391)"><path d="M-7,-5.5 h5.5 l1.5,1.5 h7.5 v9.5 h-14.5 z" fill="none" stroke="#666" stroke-width="1.1"/></g><g transform="translate(73,417)"><path d="M-5,4 L4,-6 L6.5,-3.5 L-2.5,6 L-6,7 Z" fill="none" stroke="#aaa" stroke-width="1.1" stroke-linejoin="round"/><path d="M-7,8.5 h12" stroke="#b8a8e0" stroke-width="1.1"/></g><g transform="translate(73,443)"><rect x="-7.5" y="-7.5" width="13" height="13" rx="2" fill="#fff" stroke="#444" stroke-width="1"/><rect x="-5" y="-5" width="12" height="12" rx="1" fill="#fff" stroke="#444" stroke-width="1"/><rect x="-2.5" y="-2.5" width="9.5" height="9.5" fill="#888" stroke="#444" stroke-width="0.9"/></g><g transform="translate(73,469)"><path d="M-7,-5 L-5,-7.5 L-1.5,-6 V7.5 H-7 Z" fill="#fff" stroke="#aaa" stroke-width="1"/><path d="M7,-5 L5,-7.5 L1.5,-6 V7.5 H7 Z" fill="#ddd" stroke="#aaa" stroke-width="1"/></g><g transform="translate(54,547)"><circle cx="-2" cy="-2" r="3.5" fill="none" stroke="#bbb" stroke-width="1.1"/><circle cx="4" cy="3.5" r="2.3" fill="none" stroke="#bbb" stroke-width="1.1"/><path d="M1,0 L3,2" stroke="#bbb"/></g><g transform="translate(54,573)"><path d="M-7,-2 L6,-4 L7.5,5 L-5.5,7 Z" fill="#999"/><circle cx="-2" cy="1.5" r="2" fill="#fff"/><circle cx="3" cy="0.5" r="2" fill="#fff"/><path d="M-3,-4 V-7 M0,-4 V-7 M3,-5 V-8" stroke="#999"/></g><g transform="translate(200,547)"><circle r="2.6" fill="#222"/><rect x="-0.8" y="-8" width="1.6" height="1.8" fill="#222"/><rect x="-0.8" y="-5" width="1.6" height="1.8" fill="#222"/><rect x="-0.8" y="3.5" width="1.6" height="1.8" fill="#222"/><rect x="-0.8" y="6.5" width="1.6" height="1.8" fill="#222"/></g><g transform="translate(200,573)"><circle r="2.6" fill="#222"/><rect x="-0.8" y="-8" width="1.6" height="1.8" fill="#222"/><rect x="-0.8" y="-5" width="1.6" height="1.8" fill="#222"/><rect x="-0.8" y="3.5" width="1.6" height="1.8" fill="#222"/><rect x="-0.8" y="6.5" width="1.6" height="1.8" fill="#222"/></g><rect x="45" y="622" width="190" height="6.5" fill="#ababab"/><rect x="40" y="704" width="200" height="1" fill="#dcdcdc"/><g transform="translate(50,718)"><path d="M-5.5,-3 L0,2.5 L5.5,-3" fill="none" stroke="#555" stroke-width="1.9"/></g><g transform="translate(72.3,743.3)"><path d="M0.3,-6.9 H4.1 L7.3,-4 V7.1 H-3.9 L-7,4 V0 H-0.3 Z M0.3,-6.9 L3,-4 H7.3 M3,-4 V3.1 H-3.9 L-7,0 M-3.9,3.1 V7.1 M-0.3,0 L3,3.1" fill="#fff" stroke="#555" stroke-width="1" stroke-linejoin="round"/></g><g transform="translate(72.3,769.3)"><path d="M0.3,-6.9 H4.1 L7.3,-4 V7.1 H-3.9 L-7,4 V0 H-0.3 Z M0.3,-6.9 L3,-4 H7.3 M3,-4 V3.1 H-3.9 L-7,0 M-3.9,3.1 V7.1 M-0.3,0 L3,3.1" fill="#fff" stroke="#555" stroke-width="1" stroke-linejoin="round"/></g><g transform="translate(72.3,795.3)"><path d="M0.3,-6.9 H4.1 L7.3,-4 V7.1 H-3.9 L-7,4 V0 H-0.3 Z M0.3,-6.9 L3,-4 H7.3 M3,-4 V3.1 H-3.9 L-7,0 M-3.9,3.1 V7.1 M-0.3,0 L3,3.1" fill="#fff" stroke="#555" stroke-width="1" stroke-linejoin="round"/></g><path d="M246,539.5 H277.5 V571.5 H246" fill="#fff" stroke="#c8c8c8"/><g transform="translate(262,556)"><path d="M-5,-7 V7 M-3,-6 H7 M-1,-2 H7 M-1,2 H7 M-3,6 H7" stroke="#333" stroke-width="1.4"/><path d="M-7,-9 L-5,-7 L-3,-9" fill="none" stroke="#333" stroke-width="1"/></g></svg>
<div class="t" style="left:86.00px;top:94.00px;font-size:13.25px;font-style:italic;color:#8c8c8c;transform:scaleX(0.9627);transform-origin:0 0">Filter by name or type</div>
<div class="t" style="left:43.67px;top:123.00px;font-size:14.50px;color:#333;transform:scaleX(0.9342);transform-origin:0 0">Features (20)</div>
<div class="t" style="left:62.44px;top:150.00px;font-size:14.00px;color:#333;transform:scaleX(0.9583);transform-origin:0 0">Default geometry</div>
<div class="t" style="left:85.40px;top:176.00px;font-size:14.00px;color:#333;transform:scaleX(0.9245);transform-origin:0 0">Origin</div>
<div class="t" style="left:85.50px;top:202.00px;font-size:14.00px;color:#9e9e9e;transform:scaleX(0.9567);transform-origin:0 0">Top</div>
<div class="t" style="left:84.52px;top:228.00px;font-size:14.00px;color:#9e9e9e;transform:scaleX(0.9753);transform-origin:0 0">Front</div>
<div class="t" style="left:84.54px;top:254.00px;font-size:14.00px;color:#9e9e9e;transform:scaleX(0.9593);transform-origin:0 0">Right</div>
<div class="t" style="left:86.40px;top:280.00px;font-size:14.00px;color:#333;transform:scaleX(0.9023);transform-origin:0 0">Origin Cube</div>
<div class="t" style="left:84.67px;top:306.00px;font-size:14.00px;color:#9e9e9e;transform:scaleX(0.9303);transform-origin:0 0">Mate connector 1</div>
<div class="t" style="left:65.45px;top:332.00px;font-size:14.00px;color:#9e9e9e;transform:scaleX(0.9524);transform-origin:0 0">Layout Sketch</div>
<div class="t" style="left:86.50px;top:358.00px;font-size:14.00px;color:#333;transform:scaleX(0.9183);transform-origin:0 0">Tube (3)</div>
<div class="t" style="left:85.35px;top:384.00px;font-size:14.00px;color:#333;transform:scaleX(0.9483);transform-origin:0 0">Plate (3)</div>
<div class="t" style="left:84.14px;top:410.00px;font-size:14.00px;color:#9e9e9e;transform:scaleX(0.9569);transform-origin:0 0">Plate Sketch</div>
<div class="t" style="left:85.40px;top:436.00px;font-size:14.00px;font-weight:bold;color:#222;transform:scaleX(0.9310);transform-origin:0 0">Plate Extrude</div>
<div class="t" style="left:85.40px;top:462.00px;font-size:14.00px;font-style:italic;color:#9e9e9e;transform:scaleX(0.9582);transform-origin:0 0">Plate Mirror</div>
<div class="t" style="left:86.50px;top:488.00px;font-size:14.00px;color:#333;transform:scaleX(0.9042);transform-origin:0 0">2x1 Tube (2)</div>
<div class="t" style="left:85.56px;top:514.00px;font-size:14.00px;color:#333;transform:scaleX(0.9444);transform-origin:0 0">Polycarb Floor (2)</div>
<div class="t" style="left:66.70px;top:540.00px;font-size:14.00px;font-style:italic;color:#9e9e9e;transform:scaleX(0.9204);transform-origin:0 0">Feeeder Wheel Belt</div>
<div class="t" style="left:66.70px;top:566.00px;font-size:14.00px;font-style:italic;color:#9e9e9e;transform:scaleX(0.9178);transform-origin:0 0">Feeder Wheel Shaft</div>
<div class="t" style="left:85.57px;top:592.00px;font-size:14.00px;color:#333;transform:scaleX(0.9342);transform-origin:0 0">Pocketing (2)</div>
<div class="t" style="left:62.45px;top:711.00px;font-size:14.00px;color:#333;transform:scaleX(0.9478);transform-origin:0 0">Parts (3)</div>
<div class="t" style="left:85.00px;top:737.00px;font-size:14.00px;color:#333;transform:scaleX(0.9063);transform-origin:0 0">Origin Cube</div>
<div class="t" style="left:85.00px;top:763.00px;font-size:14.00px;color:#333;transform:scaleX(0.9333);transform-origin:0 0">Tube 1&quot;x1&quot;x12&quot;</div>
<div class="t" style="left:85.00px;top:789.00px;font-size:14.00px;font-weight:bold;color:#222;transform:scaleX(0.9502);transform-origin:0 0">Plate</div>
<div class="a" style="left:322px;top:79px;width:220px;height:358px;background:#fff;box-shadow:0 2px 6px rgba(0,0,0,0.22)"></div><svg class="full" viewBox="0 0 1919 1079"><rect x="486" y="79" width="28" height="28" fill="#14890f"/><path d="M492.5,93 L498,98.5 L507.5,88" fill="none" stroke="#fff" stroke-width="3"/><path d="M523,88.5 L533.5,99 M533.5,88.5 L523,99" stroke="#c8242c" stroke-width="2.6"/><rect x="322" y="107" width="220" height="1" fill="#e4e4e4"/><rect x="322" y="133" width="220" height="1" fill="#e4e4e4"/><rect x="322" y="131.5" width="70" height="2.2" fill="#1e4f9e"/><rect x="322" y="161" width="220" height="1" fill="#e4e4e4"/><rect x="322" y="159.5" width="46" height="2.2" fill="#1e4f9e"/><rect x="325.5" y="169.5" width="213" height="42.5" rx="2" fill="#e2eef9" stroke="#3366aa" stroke-width="1"/><path d="M519.5,197.5 L527,205 M527,197.5 L519.5,205" stroke="#555" stroke-width="1.1"/><path d="M502,229 h8 l-4,4.5z" fill="#333"/><path d="M537,223 L525,235 M521,239 L531,236 L524,229 Z" stroke="#222" stroke-width="2" fill="#222"/><path d="M523,226 L528,221" stroke="#aaa" stroke-width="1"/><rect x="322" y="243" width="194" height="1" fill="#e0e0e0"/><rect x="364" y="271" width="152" height="1" fill="#d8d8d8"/><path d="M329,281 L334,286 L329,291" fill="none" stroke="#bbb" stroke-width="1.3"/><rect x="346.5" y="280.5" width="11.5" height="11.5" rx="2" fill="#fff" stroke="#555" stroke-width="1"/><path d="M329,308.5 L334,313.5 L329,318.5" fill="none" stroke="#bbb" stroke-width="1.3"/><rect x="346.5" y="308.0" width="11.5" height="11.5" rx="2" fill="#fff" stroke="#555" stroke-width="1"/><rect x="326.5" y="335.5" width="11.5" height="11.5" rx="2" fill="#fff" stroke="#555" stroke-width="1"/><rect x="326.5" y="362.5" width="11.5" height="11.5" rx="2" fill="#fff" stroke="#555" stroke-width="1"/><path d="M329,390.5 L334,395.5 L329,400.5" fill="none" stroke="#bbb" stroke-width="1.3"/><rect x="346.5" y="390.0" width="11.5" height="11.5" rx="2" fill="#fff" stroke="#555" stroke-width="1"/><rect x="329" y="422.3" width="112" height="1.6" fill="#444"/><circle cx="406" cy="423" r="5.5" fill="#fff" stroke="#777" stroke-width="1"/><rect x="467.5" y="412.5" width="48" height="21" rx="3" fill="#fff" stroke="#bbb"/><circle cx="530.5" cy="425.5" r="6" fill="#aaa"/><text x="530.5" y="429.5" text-anchor="middle" font-family="Liberation Sans" font-weight="bold" font-size="10" fill="#fff">?</text></svg>
<div class="t" style="left:327.60px;top:85.00px;font-size:15.00px;color:#333;transform:scaleX(0.8962);transform-origin:0 0">Plate Extrude</div>
<div class="t" style="left:343.50px;top:113.00px;font-size:14.75px;font-weight:bold;color:#1e4f9e;transform:scaleX(0.7630);transform-origin:0 0;font-weight:600">Solid</div>
<div class="t" style="left:414.00px;top:113.00px;font-size:14.75px;color:#333;transform:scaleX(0.7901);transform-origin:0 0">Surface</div>
<div class="t" style="left:497.00px;top:113.00px;font-size:14.75px;color:#333;transform:scaleX(0.8073);transform-origin:0 0">Thin</div>
<div class="t" style="left:332.50px;top:141.00px;font-size:14.50px;font-weight:bold;color:#1e4f9e;transform:scaleX(0.8023);transform-origin:0 0">New</div>
<div class="t" style="left:378.50px;top:141.00px;font-size:14.50px;color:#333;transform:scaleX(0.7966);transform-origin:0 0">Add</div>
<div class="t" style="left:419.70px;top:141.00px;font-size:14.50px;color:#333;transform:scaleX(0.8030);transform-origin:0 0">Remove</div>
<div class="t" style="left:483.65px;top:141.00px;font-size:14.50px;color:#333;transform:scaleX(0.8520);transform-origin:0 0">Intersect</div>
<div class="t" style="left:331.00px;top:175.00px;font-size:11.00px;color:#444;transform:scaleX(0.9086);transform-origin:0 0">Faces and sketch regions to extrude</div>
<div class="t" style="left:331.18px;top:193.00px;font-size:16.00px;color:#333;transform:scaleX(0.8166);transform-origin:0 0">Face of Plate Sketch</div>
<div class="t" style="left:327.04px;top:223.00px;font-size:15.25px;color:#333;transform:scaleX(0.9559);transform-origin:0 0">Blind</div>
<div class="t" style="left:326.60px;top:254.00px;font-size:13.50px;color:#555;transform:scaleX(0.8981);transform-origin:0 0">Depth</div>
<div class="t" style="left:474.00px;top:254.00px;font-size:13.50px;color:#333;transform:scaleX(0.9619);transform-origin:0 0">0.25 in</div>
<div class="t" style="left:361.07px;top:279.00px;font-size:14.50px;color:#555;transform:scaleX(0.9261);transform-origin:0 0">Direction</div>
<div class="t" style="left:362.00px;top:307.00px;font-size:14.50px;color:#555;transform:scaleX(0.9308);transform-origin:0 0">Starting offset</div>
<div class="t" style="left:342.00px;top:334.00px;font-size:14.50px;color:#555;transform:scaleX(0.9381);transform-origin:0 0">Symmetric</div>
<div class="t" style="left:341.01px;top:361.00px;font-size:14.50px;color:#555;transform:scaleX(0.9871);transform-origin:0 0">Draft</div>
<div class="t" style="left:362.00px;top:388.00px;font-size:14.50px;color:#555;transform:scaleX(0.8908);transform-origin:0 0">Second end position</div>
<div class="t" style="left:477.19px;top:416.00px;font-size:15.50px;color:#333;transform:scaleX(0.8087);transform-origin:0 0">Final</div>
<svg class="full" viewBox="0 0 1919 1079"><path d="M1824,100.5 L1830,94 L1836,100.5 Z" fill="#e3e5e7"/><path d="M1824,233 H1836 L1830,239Z" fill="#e3e5e7"/><path d="M1756,166 L1764,160 V172Z" fill="#e3e5e7"/><path d="M1903,166 L1895,160 V172Z" fill="#e3e5e7"/><path d="M1809,101.5 Q1791,105 1782,117" fill="none" stroke="#e3e5e7" stroke-width="4.5"/><path d="M1775.5,125 L1777,111.5 L1788,119Z" fill="#e3e5e7"/><path d="M1851,101.5 Q1869,105 1878,117" fill="none" stroke="#e3e5e7" stroke-width="4.5"/><path d="M1884.5,125 L1883,111.5 L1872,119Z" fill="#e3e5e7"/><path d="M1826,129 Q1831,127.5 1836,129 L1864,137 Q1871,139 1871,146 L1871,189 Q1871,196 1864,198 L1838,205.5 Q1833,207 1828,205.5 L1798,197 Q1791,195 1791,188 L1791,147 Q1791,140 1798,138 Z" fill="#e7e9eb"/><path d="M1806,138.5 L1826,132 Q1829,131 1832,132 L1855,136.5 Q1858,137.5 1855,139 L1837,145 Q1834,146 1831,145 L1806,141 Q1803,140 1806,138.5 Z" fill="#fff"/><path d="M1795,156 Q1795,150 1801,151.5 L1824,157 Q1829.5,158.5 1829.5,164 L1829.5,187 Q1829.5,193 1824,191.5 L1801,186 Q1795,184.5 1795,179 Z" fill="#fff"/><path d="M1867.5,156 Q1867.5,150 1862,151.5 L1845,157 Q1840,158.5 1840,164 L1840,187 Q1840,193 1845,191.5 L1862,186 Q1867.5,184.5 1867.5,179 Z" fill="#fff"/><circle cx="1835" cy="152.5" r="6.3" fill="#fff"/><ellipse cx="1835" cy="199.5" rx="6" ry="4.5" fill="#fff"/><text x="0" y="0" font-family="Liberation Sans" font-size="11" fill="#333" transform="translate(1801,173.5) rotate(11) scale(0.82,1.05)">Front</text><text x="0" y="0" font-family="Liberation Sans" font-size="10.5" fill="#333" transform="translate(1847,177) rotate(-14) scale(0.78,1.05)">Right</text><text x="0" y="0" font-family="Liberation Sans" font-size="8" fill="#444" transform="translate(1823.5,137) rotate(14) scale(1,0.6)">Top</text><path d="M1787,196 V141" stroke="#4848c8" stroke-width="1.2"/><path d="M1787,196 L1833,207.5" stroke="#d03030" stroke-width="1.2"/><path d="M1787,196 L1822,181.5" stroke="#5bb55b" stroke-width="0.8"/><text x="1783" y="135" font-family="Liberation Sans" font-size="11" fill="#4848c8">Z</text><text x="1837" y="213.5" font-family="Liberation Sans" font-size="11" fill="#d03030">X</text><text x="1824" y="183" font-family="Liberation Sans" font-size="8" fill="#9ccc9c">Y</text><path d="M1875,223.5 L1883.5,226.5 V237 L1875,240.5 L1866.5,237 V226.5 Z" fill="#fff" stroke="#333" stroke-width="1"/><path d="M1866.5,226.5 L1875,229.5 V240.5 L1866.5,237 Z" fill="#9a9a9a"/><path d="M1866.5,226.5 L1875,229.5 L1883.5,226.5 M1875,229.5 V240.5" fill="none" stroke="#444" stroke-width="0.8"/><path d="M1875,223.5 L1883.5,226.5 V237 L1875,240.5 L1866.5,237 V226.5 Z" fill="none" stroke="#333" stroke-width="1"/><path d="M1891,231 h8 l-4,4z" fill="#333"/><path d="M1919,433.5 H1888.5 V565.5 H1919 M1888.5,466 H1919 M1888.5,499 H1919 M1888.5,532 H1919" fill="#fff" stroke="#cfcfcf"/><path d="M1919,576.5 H1888.5 V676 H1919 M1888.5,609.5 H1919 M1888.5,642.5 H1919" fill="#fff" stroke="#cfcfcf"/><g transform="translate(1905,450)"><path d="M-8,6 L-2,-7 L3,-6 L6,-2 L8,6 Z" fill="#888"/><rect x="-8" y="3" width="16" height="5" fill="#eee" stroke="#888"/><circle cx="-5" cy="5.5" r="1" fill="#555"/></g><g transform="translate(1905,483)"><rect x="-9" y="-9" width="8" height="7" fill="#1f5fbf"/><path d="M-9,-6.5 h8 M-9,-4 h8 M-6.5,-9 v7 M-4,-9 v7" stroke="#fff" stroke-width="0.6"/><path d="M1,-5 L8,-2 V5 L1,8 L-6,5 V-2 Z M-6,-2 L1,1 L8,-2 M1,1 V8" fill="none" stroke="#333" stroke-width="1.1"/></g><g transform="translate(1905,516)"><rect x="-9" y="-9" width="8" height="7" fill="none" stroke="#333" stroke-width="0.9"/><path d="M-9,-6.5 h8 M-9,-4 h8 M-6.5,-9 v7 M-4,-9 v7" stroke="#333" stroke-width="0.6"/><path d="M1,-3 L6,-1 V4 L1,6 L-4,4 V-1 Z" fill="#ddd" stroke="#333" stroke-width="1"/><path d="M-7,-1 Q-9,3 -7,8 M8,-1 Q10,3 8,8" fill="none" stroke="#333" stroke-width="1"/></g><g transform="translate(1905,549)"><rect x="-9" y="-9" width="7" height="7" fill="none" stroke="#333" stroke-width="0.9"/><path d="M-9,-6.5 h7 M-9,-4 h7 M-6.5,-9 v7 M-4,-9 v7" stroke="#333" stroke-width="0.6"/><text x="0" y="7" font-family="Liberation Serif" font-style="italic" font-weight="bold" font-size="13" fill="#222" text-anchor="middle">x)</text><path d="M-8,-1 Q-10,3 -8,8" fill="none" stroke="#222" stroke-width="1.3"/></g><g transform="translate(1905,593)"><rect x="-9" y="-9" width="18" height="18" rx="2" fill="#d8d8d8"/><path d="M-8,-2 L7,-5 L8.5,5 L-6.5,8 Z" fill="#1a1a1a"/><circle cx="-2" cy="1" r="2.5" fill="#fff" stroke="#3a8ad0" stroke-width="0.8"/><circle cx="3.5" cy="0" r="2.5" fill="#fff" stroke="#3a8ad0" stroke-width="0.8"/><path d="M-3,-5 V-8 M0,-5 V-8 M3,-6 V-9" stroke="#555"/></g><g transform="translate(1905,626)"><rect x="-9.5" y="-9.5" width="19" height="19" rx="2" fill="#4caf50"/><path d="M-6.5,-5 Q-3,-6.5 -0.5,-5 V6 Q-3,4.5 -6.5,6 Z M6.5,-5 Q3,-6.5 0.5,-5 V6 Q3,4.5 6.5,6 Z" fill="#fff"/></g><g transform="translate(1905,659)"><rect x="-9.5" y="-9.5" width="19" height="19" rx="2" fill="#ddd"/><rect x="-8.5" y="-8.5" width="17" height="17" fill="#1450b0"/><path d="M-6.5,-5 Q-3,-6.5 -0.5,-5 V6 Q-3,4.5 -6.5,6 Z M6.5,-5 Q3,-6.5 0.5,-5 V6 Q3,4.5 6.5,6 Z" fill="#fff"/></g><g transform="translate(1900,1038)"><path d="M-9,4.5 Q-9,-6 0,-6 Q9,-6 9,4.5 Z" fill="#fff" stroke="#333" stroke-width="1.4"/><path d="M-6,3.5 Q-6,-3 0,-3 Q6,-3 6,3.5 Q4,3 2.5,1 Q0,-1 -2.5,1 Q-4,3 -6,3.5Z" fill="none" stroke="#333" stroke-width="1.1"/><path d="M-7,-1 l1,1 M-4,-4 l1,1.2 M0,-5 v1.4 M4,-4 l-1,1.2 M7,-1 l-1,1" stroke="#555" stroke-width="0.8"/></g></svg>
<svg class="full" viewBox="0 0 1919 1079"><rect x="40" y="1049" width="206" height="1" fill="#cfcfcf"/><rect x="40" y="1050" width="1879" height="29" fill="#d7d7d7"/><rect x="246" y="1049.5" width="203" height="0.8" fill="#d0d0d0"/><rect x="649" y="1049.5" width="1270" height="0.8" fill="#d0d0d0"/><path d="M49,1064.5 H64 M56.5,1057 V1072" stroke="#555" stroke-width="3"/><path d="M73.5,1050.5 H108 L116.5,1063.5 L108,1077 H73.5 Z" fill="#ececec"/><path d="M83,1063 L92,1053.5 L96,1057.5 V1054 H99 V1060.5 L101,1062.5 V1071 H94 V1065 H90 V1071 H83 Z" fill="#666"/><path d="M108,1050.5 H236.5 L245,1063.5 L236.5,1077 H108 L116.5,1063.5 Z" fill="#fafafa"/><path d="M247,1077 V1061 Q247,1050.5 258,1050.5 H448 V1077 Z" fill="#ebebeb"/><circle cx="266.8" cy="1062.4" r="4.6" fill="none" stroke="#6a9ad8" stroke-width="4"/><rect x="265.9" y="1055" width="1.8" height="2.6" fill="#e0f4ff"/><rect x="265.9" y="1067" width="1.8" height="2.6" fill="#e0f4ff"/><path d="M278.5,1054.5 H291.8 L295.5,1058.2 V1071.5 H281.8 L278.5,1068.3 Z" fill="#fff" stroke="#222" stroke-width="1.1" stroke-linejoin="round"/><path d="M278.9,1055 H291.5 L290.8,1058.3 H282.3 V1066.7 L279,1068 Z" fill="#999"/><rect x="282.3" y="1058.3" width="8.5" height="8.3" fill="#888" stroke="#444" stroke-width="0.5"/><rect x="449" y="1049" width="200" height="28" fill="#fff"/><path d="M449,1076.2 H646 L648.5,1074.5 V1078 H449Z" fill="#1e4f9e"/><path d="M462,1057 L465,1055 L468,1056 V1071 H462 Z M470,1053 L473,1051.5 L477,1053 V1071 H470 Z" fill="none" stroke="#333" stroke-width="1.1"/></svg>
<div class="t" style="left:129.58px;top:1056.00px;font-size:14.75px;color:#555;transform:scaleX(0.9240);transform-origin:0 0">Exercise 1: Flat</div>
<div class="t" style="left:299.14px;top:1056.00px;font-size:16.00px;color:#555;transform:scaleX(0.8645);transform-origin:0 0">Exercise 1 Assembly</div>
<div class="t" style="left:481.85px;top:1056.00px;font-size:16.00px;color:#333;transform:scaleX(0.8501);transform-origin:0 0">Exercise 1 Part Studio</div>

</body></html>
